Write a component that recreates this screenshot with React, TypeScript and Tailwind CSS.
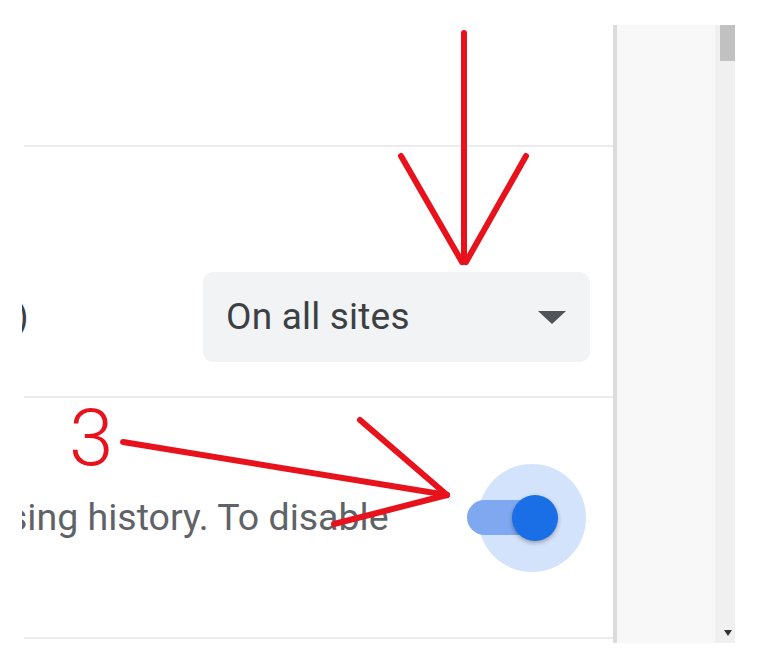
import React from 'react';

const red = '#e8121c';

function Toggle() {
  return (
    <div className="relative w-[88px] h-[46px] flex items-center">
      <div className="absolute left-[11px] top-[-31px] w-[108px] h-[108px] rounded-full bg-[#d3e3fc]" />
      <div className="relative w-full h-[35px] rounded-full bg-[#7fa8f0]" />
      <div className="absolute right-[-3px] top-0 w-[46px] h-[46px] rounded-full bg-[#1a6ee6] shadow-[0_2px_4px_rgba(0,0,0,0.3)]" />
    </div>
  );
}

function Annotations() {
  return (
    <svg className="absolute inset-0 pointer-events-none" width="760" height="669" viewBox="0 0 760 669">
      <g stroke={red} strokeWidth="6" strokeLinecap="round" fill="none">
        <line x1="464" y1="33" x2="464" y2="262" />
        <line x1="401" y1="156" x2="462" y2="262" />
        <line x1="526" y1="156" x2="466" y2="262" />
        <line x1="123" y1="442" x2="447" y2="495" />
        <line x1="360" y1="420" x2="447" y2="495" />
        <line x1="334" y1="524" x2="447" y2="495" />
      </g>
    </svg>
  );
}

export default function App() {
  return (
    <div className="relative w-[760px] h-[669px] bg-white overflow-hidden font-['Roboto','Liberation_Sans',sans-serif]">
      <div className="flex">
        <div className="w-[613px] pl-[22px]">
          <div className="overflow-hidden">
            <div className="h-[145px]" />
            <div className="h-[2px] ml-[2px] bg-[#ececec]" />
            <div className="h-[249px] pt-[125px] flex items-start">
              <div className="h-[90px] flex items-center flex-1">
                <span className="-ml-[6px] text-[36px] text-[#3c4043]">)</span>
              </div>
              <div className="w-[387px] h-[90px] mr-[23px] rounded-[10px] bg-[#f1f3f4] flex items-center justify-between pl-[23px] pr-[24px]">
                <span className="text-[37px] text-[#3c4043] tracking-[0.2px]">On all sites</span>
                <span className="w-0 h-0 border-l-[14px] border-r-[14px] border-t-[13px] border-l-transparent border-r-transparent border-t-[#505357]" />
              </div>
            </div>
            <div className="h-[2px] ml-[2px] bg-[#ececec]" />
            <div className="h-[239px] flex items-center pr-[58px]">
              <span className="-ml-[14px] flex-1 text-[37.5px] text-[#5f6368] whitespace-nowrap">sing history. To disable</span>
              <Toggle />
            </div>
            <div className="h-[2px] ml-[2px] bg-[#ececec]" />
          </div>
        </div>
        <div className="mt-[25px] h-[618px] w-[122px] flex border-l-4 border-[#dcdcdc]">
          <div className="flex-1 bg-[#f8f8f8]" />
          <div className="w-[20px] bg-[#f0f0f0] flex flex-col justify-between items-end">
            <div className="w-[15px] h-[36px] bg-[#c1c1c1]" />
            <div className="mb-[7px] mr-[3px] w-0 h-0 border-l-[4px] border-r-[4px] border-t-[6px] border-l-transparent border-r-transparent border-t-[#333]" />
          </div>
        </div>
      </div>
      <span className="absolute left-[69px] top-[398px] text-[80px] leading-none font-light text-[#e8121c]">3</span>
      <Annotations />
    </div>
  );
}
